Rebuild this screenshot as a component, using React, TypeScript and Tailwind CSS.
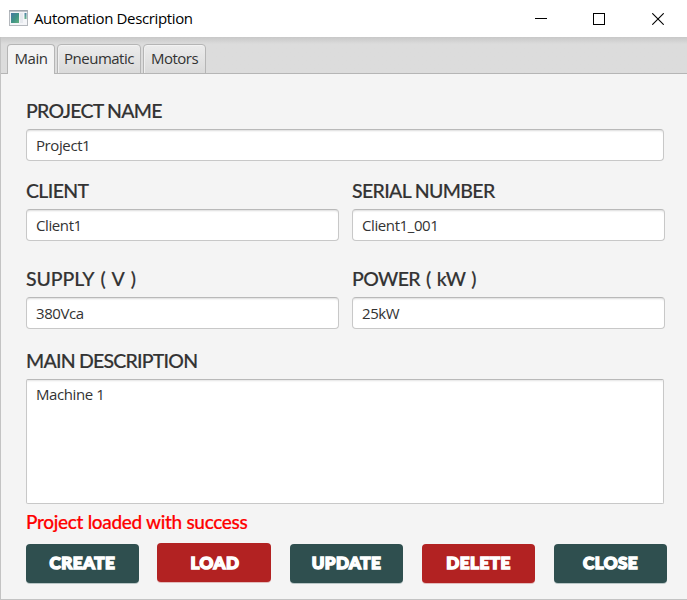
import type { ReactNode } from "react";

const labelFont = "font-['Lato','Liberation_Sans',sans-serif]";
const uiFont = "font-['Open_Sans','Noto_Sans',sans-serif]";

function AppIcon() {
  return (
    <svg width="19" height="16" viewBox="0 0 19 16" className="-mt-px shrink-0">
      <defs>
        <linearGradient id="pane" x1="0" y1="0" x2="1" y2="1">
          <stop offset="0" stopColor="#4778a4" />
          <stop offset="0.55" stopColor="#3f9485" />
          <stop offset="1" stopColor="#64b080" />
        </linearGradient>
        <linearGradient id="bar" x1="0" y1="0" x2="0" y2="1">
          <stop offset="0" stopColor="#4d83a5" />
          <stop offset="1" stopColor="#69b78a" />
        </linearGradient>
      </defs>
      <rect x="0.5" y="0.5" width="18" height="15" fill="#f4f5f8" stroke="#b4b8bd" />
      <path d="M0.5 1H18.5" stroke="#8c949c" />
      <rect x="2" y="3" width="8" height="10" fill="url(#pane)" />
      <rect x="11" y="3" width="3" height="10" fill="#e6e9ee" />
      <rect x="15.5" y="3" width="2" height="6" fill="url(#bar)" />
    </svg>
  );
}

function TitleBar() {
  return (
    <header className="flex h-[37px] shrink-0 items-center bg-white pl-[9px]">
      <div className="flex grow items-center gap-[6px]">
        <AppIcon />
        <span className={`${uiFont} pb-[2px] text-[15px] leading-5 tracking-[-0.36px] text-black`}>
          Automation Description
        </span>
      </div>
      <svg width="12" height="12" className="mr-[46px]" shapeRendering="crispEdges">
        <path d="M0 5.5H12" stroke="#000" />
      </svg>
      <svg width="12" height="12" className="mr-[47px]" shapeRendering="crispEdges">
        <rect x="0.5" y="0.5" width="11" height="11" fill="none" stroke="#000" />
      </svg>
      <svg width="12" height="12" className="mr-[23px]">
        <path d="M0.3 0.3L11.7 11.7M11.7 0.3L0.3 11.7" stroke="#000" strokeWidth="1.1" />
      </svg>
    </header>
  );
}

function Tab({ children, active, className }: { children: ReactNode; active?: boolean; className: string }) {
  const look = active
    ? "border-b-0 bg-[#f4f4f4]"
    : "bg-linear-to-b from-[#ececec] to-[#dadada] shadow-[inset_0_1px_0_#f3f3f3,inset_1px_0_0_#efefef]";
  return (
    <button
      className={`${uiFont} flex h-[30px] items-start justify-center rounded-t-[4px] border border-[#b5b5b5] pt-[3px] text-[15px] leading-5 tracking-[-0.5px] whitespace-nowrap text-[#333] ${look} ${className}`}
    >
      {children}
    </button>
  );
}

function Label({ children, className = "tracking-[-0.65px]" }: { children: ReactNode; className?: string }) {
  return (
    <div
      className={`${labelFont} h-6 text-[19.5px] leading-6 font-medium whitespace-nowrap text-[#333] [-webkit-text-stroke:0.15px_#333] ${className}`}
    >
      {children}
    </div>
  );
}

function Field({ value, className = "" }: { value: string; className?: string }) {
  return (
    <input
      defaultValue={value}
      className={`${uiFont} block h-8 w-full rounded-[4px] border border-[#c8c8c8] border-t-[#b9b9b9] bg-white px-[9px] text-[15px] tracking-[-0.4px] text-[#333] shadow-[inset_0_2px_2px_-1px_#dcdcdc] outline-none ${className}`}
    />
  );
}

function ActionButton({ children, danger, className = "" }: { children: string; danger?: boolean; className?: string }) {
  return (
    <button
      className={`${labelFont} flex h-[39px] w-[113px] items-center justify-center rounded-[4px] text-[17px] leading-5 font-black tracking-[0.5px] text-white [-webkit-text-stroke:1.5px_white] ${
        danger ? "bg-[#b22222] shadow-[0_1px_0_#e2bcbc]" : "bg-[#2f4f4f] shadow-[0_1px_0_#b9c6c6]"
      } ${className}`}
    >
      {children}
    </button>
  );
}

export default function App() {
  return (
    <div className="flex h-[600px] w-[687px] flex-col overflow-hidden bg-[#f4f4f4]">
      <TitleBar />
      <div className="flex grow flex-col border-b border-l border-[#c3c3c3]">
        <nav className="flex h-[37px] shrink-0 items-end gap-[2px] border-b border-[#b5b5b5] bg-linear-to-b from-[#c8c8c8] via-[#dcdcdc] via-20% to-[#dcdcdc] pl-[6px]">
          <Tab active className="-mb-px w-[48px]">Main</Tab>
          <Tab className="-mb-px w-[84px]">Pneumatic</Tab>
          <Tab className="-mb-px w-[63px]">Motors</Tab>
        </nav>
        <main className="flex flex-col pt-[25px] pl-[25px]">
          <Label className="tracking-[-0.75px]">PROJECT NAME</Label>
          <div className="mt-[6px] w-[638px]">
            <Field value="Project1" />
          </div>
          <div className="mt-[18px] flex gap-[13px]">
            <div className="w-[313px]">
              <Label>CLIENT</Label>
              <Field value="Client1" className="mt-[6px]" />
            </div>
            <div className="w-[313px]">
              <Label>SERIAL NUMBER</Label>
              <Field value="Client1_001" className="mt-[6px]" />
            </div>
          </div>
          <div className="mt-[26px] flex gap-[13px]">
            <div className="w-[313px]">
              <Label className="tracking-[-0.1px] [word-spacing:1.9px]">SUPPLY ( V )</Label>
              <Field value="380Vca" className="mt-[6px]" />
            </div>
            <div className="w-[313px]">
              <Label className="tracking-[-0.6px] [word-spacing:1.7px]">POWER ( kW )</Label>
              <Field value="25kW" className="mt-[6px]" />
            </div>
          </div>
          <Label className="mt-[20px] tracking-[-0.78px]">MAIN DESCRIPTION</Label>
          <textarea
            defaultValue="Machine 1"
            className={`${uiFont} mt-[6px] h-[125px] w-[638px] resize-none rounded-[2px] border border-[#c8c8c8] border-t-[#b9b9b9] bg-white px-[9px] py-[4px] text-[15px] leading-5 tracking-[-0.4px] text-[#333] shadow-[inset_0_2px_2px_-1px_#e4e4e4] outline-none`}
          />
          <div
            className={`${labelFont} mt-[6px] h-6 text-[19px] leading-6 font-medium tracking-[-0.32px] text-[#f00] [-webkit-text-stroke:0.2px_#f00]`}
          >
            Project loaded with success
          </div>
          <div className="mt-[10px] flex gap-[19px]">
            <ActionButton className="pb-[2px]">CREATE</ActionButton>
            <ActionButton danger className="-mt-px -ml-px w-[114px] pl-[2px]">LOAD</ActionButton>
            <ActionButton className="pb-[2px]">UPDATE</ActionButton>
            <ActionButton danger className="pb-[2px]">DELETE</ActionButton>
            <ActionButton className="pb-[2px]">CLOSE</ActionButton>
          </div>
        </main>
      </div>
    </div>
  );
}
